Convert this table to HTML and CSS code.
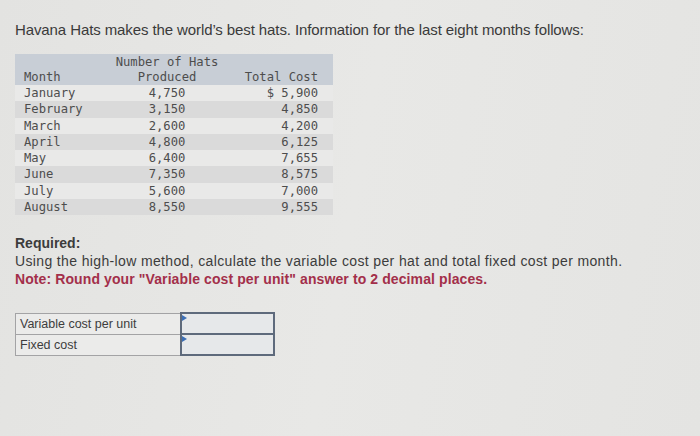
FILE: index.html
```html
<!DOCTYPE html>
<html>
<head>
<meta charset="utf-8">
<link rel="stylesheet" href="styles.css">
</head>
<body>
<div class="page">
  <p class="intro">Havana Hats makes the world’s best hats. Information for the last eight months follows:</p>
  <table class="data">
    <thead>
      <tr>
        <th class="c1">Month</th>
        <th class="c2">Number of Hats<br>Produced</th>
        <th class="c3">Total Cost</th>
      </tr>
    </thead>
    <tbody>
      <tr><td class="c1">January</td><td class="c2">4,750</td><td class="c3">$ 5,900</td></tr>
      <tr><td class="c1">February</td><td class="c2">3,150</td><td class="c3">4,850</td></tr>
      <tr><td class="c1">March</td><td class="c2">2,600</td><td class="c3">4,200</td></tr>
      <tr><td class="c1">April</td><td class="c2">4,800</td><td class="c3">6,125</td></tr>
      <tr><td class="c1">May</td><td class="c2">6,400</td><td class="c3">7,655</td></tr>
      <tr><td class="c1">June</td><td class="c2">7,350</td><td class="c3">8,575</td></tr>
      <tr><td class="c1">July</td><td class="c2">5,600</td><td class="c3">7,000</td></tr>
      <tr><td class="c1">August</td><td class="c2">8,550</td><td class="c3">9,555</td></tr>
    </tbody>
  </table>
  <div class="req">
    <p class="req-title">Required:</p>
    <p class="task">Using the high-low method, calculate the variable cost per hat and total fixed cost per month.</p>
    <p class="note">Note: Round your "Variable cost per unit" answer to 2 decimal places.</p>
  </div>
  <table class="answer">
    <tr><td class="lbl">Variable cost per unit</td><td class="inp"><span class="flag"></span></td></tr>
    <tr><td class="lbl">Fixed cost</td><td class="inp"><span class="flag"></span></td></tr>
  </table>
</div>
</body>
</html>
```

FILE: styles.css
```css
html, body {
  margin: 0;
  padding: 0;
}
body {
  width: 700px;
  height: 436px;
  overflow: hidden;
  background: linear-gradient(100deg, #e3e3e1 0%, #e8e8e6 50%, #e4e4e2 100%);
  font-family: "Liberation Sans", Arial, sans-serif;
  color: #3b3b3b;
}
.page {
  padding: 21px 0 0 15px;
}
.intro {
  margin: 0;
  font-size: 15px;
  line-height: 18px;
  letter-spacing: -0.1px;
  color: #3a3a3a;
}
.data {
  margin-top: 15px;
  border-collapse: collapse;
  width: 318px;
  table-layout: fixed;
  font-family: "DejaVu Sans Mono", monospace;
  font-size: 12.2px;
  color: #4d4d4d;
}
.data th {
  font-weight: normal;
  background: #c8ced6;
  line-height: 14.5px;
  padding: 1px 0 1px 0;
  vertical-align: bottom;
  white-space: nowrap;
}
.data td {
  line-height: 16.3px;
  height: 16.3px;
  padding: 0;
  white-space: nowrap;
}
.data tbody tr:nth-child(odd) td {
  background: #e9e9e8;
}
.data tbody tr:nth-child(even) td {
  background: #dadada;
}
.data .c1 {
  width: 100px;
  padding-left: 9px;
  text-align: left;
  box-sizing: border-box;
}
.data .c2 {
  width: 104px;
  text-align: center;
}
.data .c3 {
  width: 114px;
  text-align: right;
  padding-right: 15px;
  box-sizing: border-box;
}
.req {
  margin-top: 19px;
  font-size: 14px;
  line-height: 18px;
  color: #3c3c3c;
}
.req p {
  margin: 0;
}
.req-title {
  font-weight: bold;
}
.task {
  letter-spacing: 0.36px;
}
.note {
  font-weight: bold;
  letter-spacing: 0.1px;
  color: #a32f4a;
}
.answer {
  margin-top: 24px;
  border-collapse: collapse;
  font-size: 12.5px;
  color: #3d3d3d;
}
.answer td {
  height: 19px;
  padding: 0;
}
.answer .lbl {
  width: 160px;
  padding-left: 4px;
  border: 1px solid #a3a3a5;
  background: #ebebea;
}
.answer .inp {
  width: 91px;
  border: 2px solid #5e6a7c;
  background: #e6e8ea;
  position: relative;
}
.flag {
  position: absolute;
  left: 0;
  top: 1px;
  width: 0;
  height: 0;
  border-top: 3px solid transparent;
  border-bottom: 3px solid transparent;
  border-left: 5px solid #3c6fb6;
}
```
